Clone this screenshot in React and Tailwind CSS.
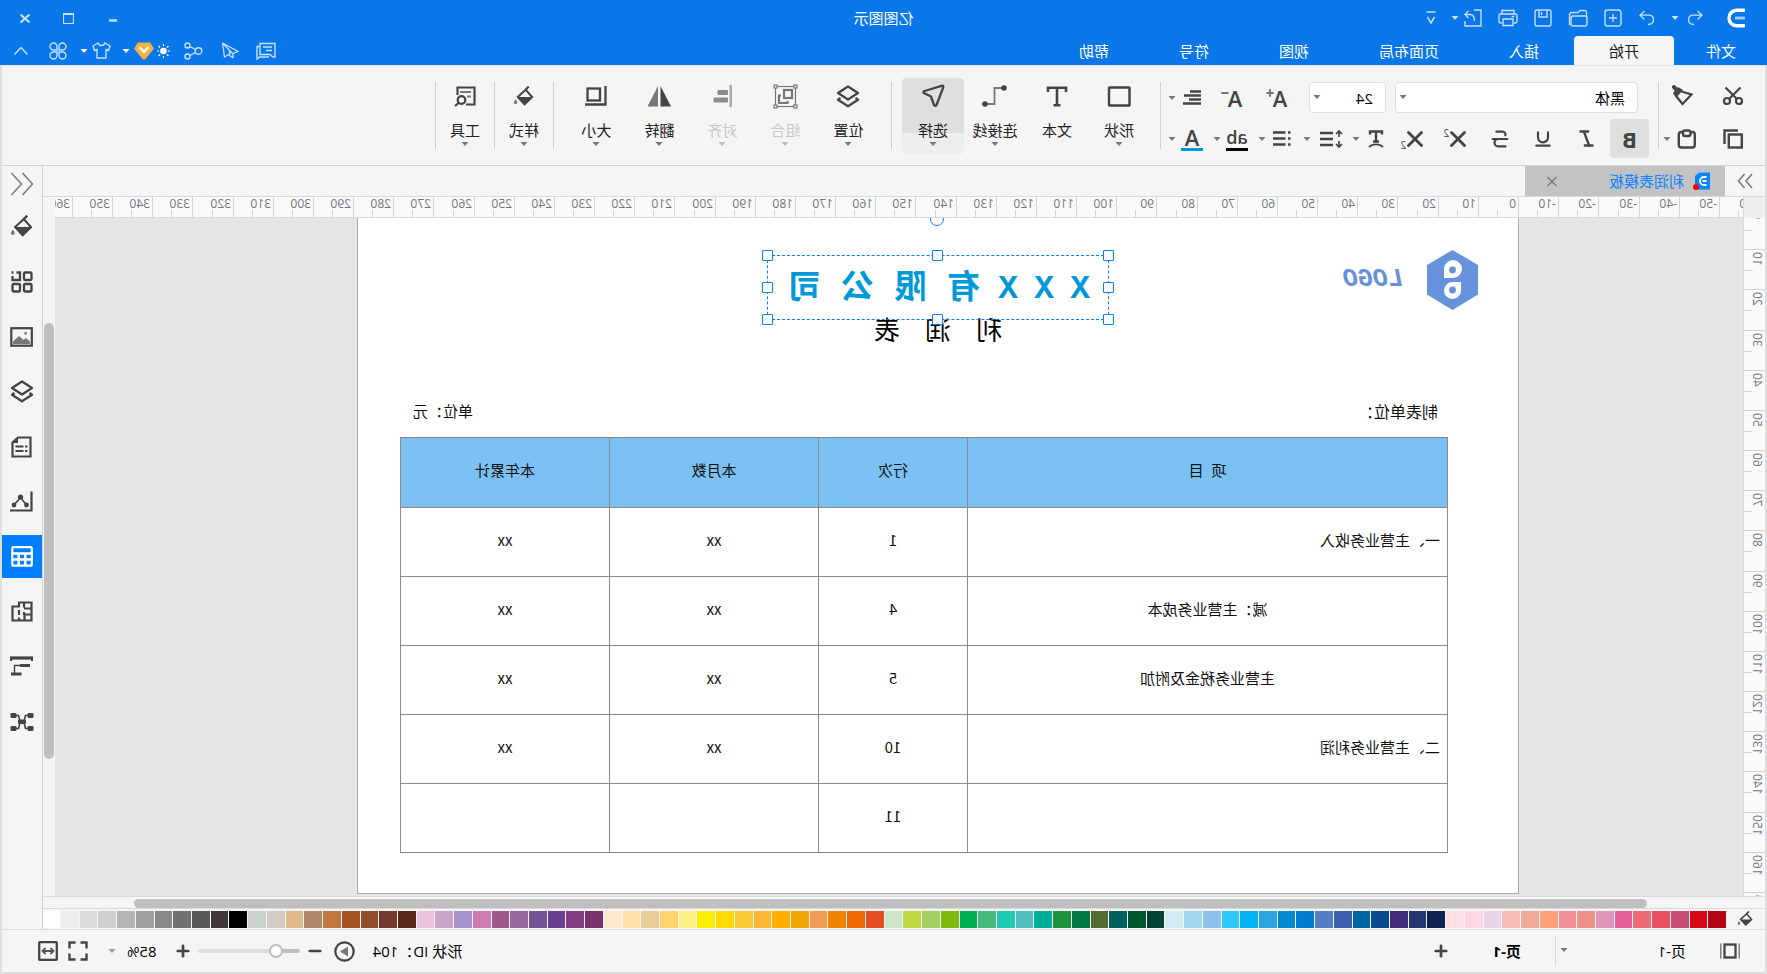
import React from "react";
import { Italic, Underline, Strikethrough, Plus, Minus, X } from "lucide-react";

function Svg({ w, h, sw = 2, className = "", children }) {
  return (
    <svg
      width={w}
      height={h}
      viewBox={`0 0 ${w} ${h}`}
      fill="none"
      stroke="currentColor"
      strokeWidth={sw}
      className={`shrink-0 ${className}`}
      aria-hidden="true"
    >
      {children}
    </svg>
  );
}

function Caret({ className = "text-[#777]" }) {
  return (
    <svg width="8" height="4" viewBox="0 0 8 4" className={`shrink-0 ${className}`} aria-hidden="true">
      <path d="M0.5 0h7L4 4z" fill="currentColor" />
    </svg>
  );
}

/* ---------- icons ---------- */

const UndoArrow = () => (
  <Svg w={16} h={16} sw={1.3}>
    <path d="M5.5 1 1 5.2l4.5 4.3M1 5.2h8.5c3.2 0 5 2 5 4.6 0 2.800-2 4.700-5.500 4.700" />
  </Svg>
);
const RedoArrow = () => (
  <Svg w={16} h={16} sw={1.3}>
    <path d="M10.500 1 15 5.200l-4.500 4.300M15 5.200H6.500c-3.200 0-5 2-5 4.600 0 2.800 2 4.700 5.500 4.700" />
  </Svg>
);
const NewIcon = () => (
  <Svg w={18} h={18} sw={1.4}>
    <rect x="1" y="1" width="16" height="16" rx="2.500" />
    <path d="M9 5v8M5 9h8" />
  </Svg>
);
const OpenIcon = () => (
  <Svg w={20} h={18} sw={1.4}>
    <path d="M1.500 8V3.500a2 2 0 0 1 2-2h4.500l2 2h7l1.500 2v10.500" />
    <rect x="1" y="7" width="16" height="10" rx="2" />
  </Svg>
);
const SaveIcon = () => (
  <Svg w={18} h={18} sw={1.4}>
    <rect x="1" y="1" width="16" height="16" rx="2" />
    <path d="M5 1v7h8V1M10.500 3v3" />
  </Svg>
);
const PrintIcon = () => (
  <Svg w={20} h={18} sw={1.400}>
    <path d="M4 5V1.500h12V5M4 14H2.500A1.500 1.500 0 0 1 1 12.500v-6A1.500 1.500 0 0 1 2.500 5h15A1.500 1.500 0 0 1 19 6.500v6a1.500 1.500 0 0 1-1.500 1.500H16" />
    <path d="M5 10h10v6.500H5zM3.500 7.500h3" />
  </Svg>
);
const ExportIcon = () => (
  <Svg w={18} h={18} sw={1.4}>
    <path d="M8 1H1v16h16v-5M17 5.500H12c-3 0-4.500 2.500-4.500 6.500M13.500 2 17 5.500 13.500 9" />
  </Svg>
);

const ChatIcon = () => (
  <Svg w={20} h={18} sw={1.4}>
    <path d="M1 1.500h15v11H6l-3 2.500H1zM16 4.500h3V17l-2.500-2H7M4 5h9M4 8.500h6" />
  </Svg>
);
const PlaneIcon = () => (
  <Svg w={18} h={17} sw={1.3}>
    <path d="M16.500 1 1 9.500l5 2v4.500M16.500 1 6.500 11.500M16.500 1 14.500 15l-4-2.500L6 16M9.500 9v4" />
  </Svg>
);
const ShareIcon = () => (
  <Svg w={19} h={18} sw={1.4}>
    <circle cx="4.500" cy="9" r="3.300" />
    <circle cx="15.500" cy="3.500" r="2.500" />
    <circle cx="15.500" cy="14.500" r="2.500" />
    <path d="m7.500 7.500 5.700-3M7.500 10.500l5.700 3" />
  </Svg>
);
const SunIcon = () => (
  <Svg w={13} h={14} sw={1.2}>
    <circle cx="6.500" cy="7" r="3.300" fill="currentColor" stroke="none" />
    <path d="M6.500 0v2M6.500 12v2M0 7h2M11 7h2M1.500 2l1.500 1.500M11.500 2 10 3.500M1.500 12 3 10.500M11.500 12 10 10.500" />
  </Svg>
);
const GemIcon = () => (
  <svg width="20" height="18" viewBox="0 0 20 18" aria-hidden="true" className="shrink-0">
    <path d="M4 0.500h12L20 6.500 11.500 17q-1.500 1.500-3 0L0 6.500z" fill="#f5b041" />
    <path d="m5.500 5 4.500 5 4.500-5" fill="none" stroke="#fff" strokeWidth="2.400" />
  </svg>
);
const ShirtIcon = () => (
  <Svg w={19} h={17} sw={1.4}>
    <path d="M6 1 1 4l1.500 4.500L5 7.500V16h9V7.500l2.500 1L18 4l-5-3c-.8 2-2 2.500-3.500 2.500S6.800 3 6 1z" />
  </Svg>
);
const AppsIcon = () => (
  <Svg w={18} h={18} sw={1.4}>
    <path d="M8 8H4.500A3.500 3.500 0 1 1 8 4.500zM10 8V4.500A3.500 3.500 0 1 1 13.500 8zM8 10v3.500A3.500 3.500 0 1 1 4.500 10zM10 10h3.500a3.500 3.500 0 1 1-3.500 3.500z" />
  </Svg>
);

const CutIcon = () => (
  <Svg w={20} h={20} sw={2.200}>
    <circle cx="4" cy="15" r="3" />
    <circle cx="16" cy="15" r="3" />
    <path d="M2.500 1.500 14 13M17.500 1.500 6 13" />
  </Svg>
);
const BrushIcon = () => (
  <Svg w={21} h={21} sw={2.200}>
    <path d="M11.500 6.500 1.500 9.500l9 9.500 6-7.500" />
    <path d="m10 5 5-3 5 6-3 5z" fill="currentColor" stroke="none" />
    <path d="m16 5.500 3-3.500" strokeWidth="4" strokeLinecap="round" />
  </Svg>
);
const CopyIcon = () => (
  <Svg w={20} h={20} sw={2.400}>
    <rect x="1.200" y="5.500" width="13" height="13" />
    <path d="M5 1.500h13.500V15" />
  </Svg>
);
const PasteIcon = () => (
  <Svg w={19} h={20} sw={2.400}>
    <rect x="1.200" y="3" width="16" height="15.500" rx="2.500" />
    <rect x="5.500" y="1.500" width="7.500" height="5.500" rx="2" fill="#f5f5f5" />
  </Svg>
);
const CurveTextIcon = () => (
  <Svg w={16} h={18} sw={2.400}>
    <path d="M2 4.500V1.500h12v3M8 1.500V11M5 11.500h6" />
    <path d="M1 17c3.500-3.500 10.500-3.500 14 0" strokeWidth="1.800" />
  </Svg>
);
const LineSpacingIcon = () => (
  <Svg w={24} h={18} sw={2.400}>
    <path d="M10 3h13M10 9h13M10 15h13" />
    <path d="M4 1v6M4 11v6M1 4l3-3 3 3M1 14l3 3 3-3" strokeWidth="1.700" />
  </Svg>
);
const ListIcon = () => (
  <Svg w={19} h={17} sw={2.400}>
    <path d="M5.500 2.500H18M5.500 8.500H18M5.500 14.500H18M0.500 2.500H3M0.500 8.500H3M0.500 14.500H3" />
  </Svg>
);
const AlignLinesIcon = () => (
  <Svg w={18} h={15} sw={2.400}>
    <path d="M0 1.500h11M0 5.500h17M0 9.500h12M0 13.500h18" />
  </Svg>
);

const ShapeIcon = () => (
  <Svg w={24} h={21} sw={2.400}>
    <rect x="1.500" y="1.500" width="20.500" height="18" rx="0.500" />
  </Svg>
);
const TextIcon = () => (
  <Svg w={22} h={21} sw={2.600}>
    <path d="M2 6V1.800h18V6M11 1.800v17.500M7.500 19.200h7" />
  </Svg>
);
const ConnectorIcon = () => (
  <Svg w={25} h={22} sw={1.800}>
    <path d="M3 3h9.500v16H22" stroke="#777" />
    <circle cx="3" cy="3" r="2.800" fill="currentColor" stroke="none" />
    <circle cx="22" cy="19" r="2.800" fill="currentColor" stroke="none" />
  </Svg>
);
const SelectIcon = () => (
  <Svg w={24} h={24} sw={2.300}>
    <path d="M1.800 3.500Q1.300 1.200 3.500 1.800L20.500 7q2 1 .3 2.200L14 12.500l-3 8.500q-1.200 1.800-2.500 0z" strokeLinejoin="round" />
  </Svg>
);
const LayersIcon = () => (
  <Svg w={24} h={23} sw={2.300}>
    <path d="M12 1.500 22 8l-10 6.500L2 8z" strokeLinejoin="round" />
    <path d="M4.500 13 2 14.800l10 6.500 10-6.500-2.500-1.800" strokeLinejoin="round" />
  </Svg>
);
const GroupIcon = () => (
  <Svg w={25} h={25} sw={1.200} className="text-[#777]">
    <rect x="2.500" y="2.500" width="20" height="20" />
    <rect x="1" y="1" width="3" height="3" fill="#f5f5f5" />
    <rect x="21" y="1" width="3" height="3" fill="#f5f5f5" />
    <rect x="1" y="21" width="3" height="3" fill="#f5f5f5" />
    <rect x="21" y="21" width="3" height="3" fill="#f5f5f5" />
    <rect x="6" y="6" width="8" height="8" strokeWidth="2.200" />
    <path d="M17 11.500h2V19h-8.500v-2" strokeWidth="2.200" />
  </Svg>
);
const AlignIcon = () => (
  <Svg w={19} h={22} sw={0} className="text-[#8c8c8c]">
    <rect x="0" y="0" width="2.500" height="22" fill="#aaa" />
    <rect x="4" y="5" width="10.500" height="5" rx="1" fill="currentColor" />
    <rect x="4" y="12.500" width="14.500" height="5" rx="1" fill="currentColor" />
  </Svg>
);
const FlipIcon = () => (
  <Svg w={24} h={21} sw={0}>
    <path d="M10.500 0v20.500H0z" fill="#444" />
    <path d="M13 0v20.500h10.500z" fill="#777" />
  </Svg>
);
const SizeIcon = () => (
  <Svg w={22} h={20} sw={2.300}>
    <rect x="7" y="2.500" width="12.500" height="12" />
    <path d="M1.500 0v18.500H22" />
  </Svg>
);
const BucketIcon = ({ w = 21 }) => (
  <svg width={w} height={w} viewBox="0 0 20 20" aria-hidden="true" className="shrink-0">
    <path d="M5 0.500 8 3.500" stroke="currentColor" strokeWidth="2" />
    <path d="M8 3.500 15.500 10.500 9 17.500 1.800 10.500z" fill="none" stroke="currentColor" strokeWidth="1.900" />
    <path d="M1.500 10.500h14.500L9 18z" fill="currentColor" />
    <path d="M17.500 12.500c1 1.500 1.700 2.300 1.700 3.200a1.600 1.600 0 0 1-3.300 0c0-.9.700-1.700 1.600-3.200z" fill="#777" />
  </svg>
);
const ToolsIcon = () => (
  <Svg w={22} h={21} sw={2.200}>
    <path d="M10 18.500H1.500v-17h17V9" />
    <path d="M5 6h11M5 10.500h4" stroke="#777" strokeWidth="1.800" />
    <circle cx="14.500" cy="14" r="3.800" />
    <path d="m17.500 17 3.500 3" />
  </Svg>
);

/* side panel icons */
const GridIcon = () => (
  <Svg w={22} h={22} sw={2.300}>
    <rect x="1.500" y="1.500" width="7.500" height="7.500" rx="1" />
    <rect x="1.500" y="13" width="7.500" height="7.500" rx="1" />
    <rect x="13" y="13" width="7.500" height="7.500" rx="1" />
    <path d="M16.500 1.500H13V9h7.500V5M19.500 1.500h2" />
  </Svg>
);
const ImageIcon = () => (
  <Svg w={23} h={20} sw={2.200}>
    <rect x="1.200" y="1.200" width="20.500" height="17.500" />
    <path d="M3 17v-2.500l4-3.500 2.500 2 4.500-4 6 5.500V17z" fill="#777" stroke="none" />
    <rect x="6" y="5" width="2.500" height="2.500" fill="#777" stroke="none" />
  </Svg>
);
const DocIcon = () => (
  <Svg w={21} h={22} sw={2.200}>
    <path d="M1.500 1.500H14l5.500 5v14h-18z" />
    <path d="M14 1v6h6z" fill="currentColor" strokeWidth="0" />
    <path d="M4.500 10.500H7M8.500 10.500h8M4.500 15H7M8.500 15h8" strokeWidth="1.900" />
  </Svg>
);
const ChartIcon = () => (
  <Svg w={23} h={21} sw={2.200}>
    <path d="M1.500 0.500V19.500H23" />
    <path d="m6.500 14 6-7.500 6.500 7.500" strokeWidth="1.600" />
    <circle cx="6.500" cy="14" r="2.400" fill="currentColor" stroke="none" />
    <circle cx="12.500" cy="6" r="2.600" fill="currentColor" stroke="none" />
    <circle cx="19" cy="14" r="2.400" fill="currentColor" stroke="none" />
  </Svg>
);
const TableIcon = () => (
  <Svg w={22} h={21} sw={2.200}>
    <rect x="1.200" y="1.200" width="19.500" height="18.500" rx="1.500" />
    <path d="M1 7.500h20M1 13.500h20M7.700 7.500v12M14.300 7.500v12" strokeWidth="2.600" />
  </Svg>
);
const FloorIcon = () => (
  <Svg w={22} h={21} sw={2.200}>
    <path d="M1.500 1.500H14v4h6.500v14h-19zM9 1.500v5M1.500 7.500H9M1.500 13.500h7v6M9 11v3M14 9v5M14 16.500v3" />
  </Svg>
);
const GanttIcon = () => (
  <Svg w={23} h={21} sw={3.200}>
    <path d="M0 2h23" />
    <path d="M1 2v3M22 2v3" strokeWidth="2" />
    <path d="M3 9.500h10M11.500 18H22" />
    <path d="M13 9.500h5.500V17" strokeWidth="1.400" />
  </Svg>
);
const MindIcon = () => (
  <Svg w={24} h={20} sw={1.600}>
    <path d="M6 3.500h2.500l1.500 5.500M6 16.500h2.500l1.500-6M18 3.500h-2.500L14 9M18 16.500h-2.500L14 10.500" />
    <rect x="0.500" y="1" width="6" height="5" rx="1.200" fill="currentColor" stroke="none" />
    <rect x="0.500" y="14" width="6" height="5" rx="1.200" fill="currentColor" stroke="none" />
    <rect x="17.500" y="1" width="6" height="5" rx="1.200" fill="currentColor" stroke="none" />
    <rect x="17.500" y="14" width="6" height="5" rx="1.200" fill="currentColor" stroke="none" />
    <rect x="8" y="7.500" width="8" height="4.500" rx="1.200" fill="currentColor" stroke="none" />
  </Svg>
);

/* ---------- title bar ---------- */

function IconButton({ label, className = "", children }) {
  return (
    <button type="button" aria-label={label} className={`flex shrink-0 items-center justify-center ${className}`}>
      {children}
    </button>
  );
}

function TitleBar() {
  return (
    <div className="grid h-9 grid-cols-[1fr_auto_1fr] items-center text-[#c4e0fc]">
      <div className="flex h-full items-center pl-[22px]">
        <Svg w={18} h={20} sw={3.400} className="text-white">
          <path d="M0 2.200h8.500a7.500 7.800 0 0 1 0 15.600H0" />
          <path d="M0 10h10" stroke="#9dcbfb" strokeWidth="3" />
        </Svg>
        <IconButton label="撤销" className="ml-6 w-4"><UndoArrow /></IconButton>
        <IconButton label="撤销列表" className="ml-2 w-2"><Caret className="text-[#c4e0fc]" /></IconButton>
        <IconButton label="恢复" className="ml-4 w-4"><RedoArrow /></IconButton>
        <div className="ml-4 flex items-center gap-[15px]">
          <IconButton label="新建" className="w-5"><NewIcon /></IconButton>
          <IconButton label="打开" className="w-5"><OpenIcon /></IconButton>
          <IconButton label="保存" className="w-5"><SaveIcon /></IconButton>
          <IconButton label="打印" className="w-5"><PrintIcon /></IconButton>
          <IconButton label="导出" className="w-5"><ExportIcon /></IconButton>
        </div>
        <IconButton label="导出选项" className="ml-1 w-2"><Caret className="text-[#c4e0fc]" /></IconButton>
        <IconButton label="自定义工具栏" className="ml-3 w-4">
          <Svg w={10} h={14} sw={1.500}>
            <path d="M0.500 1h9M1.500 6 5 12l3.500-6" />
          </Svg>
        </IconButton>
      </div>
      <h1 className="text-[15px] leading-5 text-white">亿图图示</h1>
      <div className="flex items-center justify-end gap-6 pr-[15px]">
        <IconButton label="最小化" className="h-5 w-5 pt-1">
          <Svg w={8} h={3} sw={2.500}><path d="M0 1.500h8" /></Svg>
        </IconButton>
        <IconButton label="最大化" className="h-5 w-5">
          <Svg w={11} h={11} sw={1.200}><path d="M0.500 0.500h10v10H0.500zM0 1.500h11" /></Svg>
        </IconButton>
        <IconButton label="关闭" className="h-5 w-5">
          <Svg w={10} h={9} sw={2}><path d="m0.500 0.500 9 8M9.500 0.500l-9 8" /></Svg>
        </IconButton>
      </div>
    </div>
  );
}

const menus = ["文件", "开始", "插入", "页面布局", "视图", "符号", "帮助"];

function MenuBar() {
  return (
    <div className="flex h-[29px] items-stretch text-[#c4e0fc]">
      <nav className="flex">
        {menus.map((m) => (
          <a
            key={m}
            href="#"
            className={
              m === "开始"
                ? "flex items-center rounded-t-sm bg-[#f5f5f5] px-[35px] text-[15px] leading-5 text-[#222]"
                : m === "文件"
                ? "flex items-center pr-8 pl-[31px] text-[15px] leading-5 text-white"
                : "flex items-center px-[35px] text-[15px] leading-5 text-white"
            }
          >
            {m}
          </a>
        ))}
      </nav>
      <div className="ml-auto flex items-center pr-3">
        <div className="flex gap-4">
          <IconButton label="反馈" className="w-5"><ChatIcon /></IconButton>
          <IconButton label="发送" className="w-5"><PlaneIcon /></IconButton>
          <IconButton label="分享" className="w-5"><ShareIcon /></IconButton>
        </div>
        <IconButton label="会员" className="ml-[14px] gap-[3px] text-white">
          <SunIcon />
          <GemIcon />
        </IconButton>
        <IconButton label="会员选项" className="ml-1 w-2"><Caret className="text-white" /></IconButton>
        <IconButton label="皮肤" className="ml-[10px] w-5"><ShirtIcon /></IconButton>
        <IconButton label="皮肤选项" className="ml-1 w-2"><Caret className="text-white" /></IconButton>
        <IconButton label="应用" className="ml-3 w-5"><AppsIcon /></IconButton>
        <IconButton label="折叠功能区" className="ml-[18px] w-[18px]">
          <Svg w={14} h={8} sw={1.500}><path d="m0.500 7.500 6.500-7 6.500 7" /></Svg>
        </IconButton>
      </div>
    </div>
  );
}

/* ---------- ribbon ---------- */

const Divider = () => <div className="mt-1 h-[67px] w-px shrink-0 bg-[#cfcfcf]" />;

function Dropdown({ label, wide, children }) {
  return (
    <button type="button" aria-label={label} className="flex h-full shrink-0 items-center gap-1">
      <span className={wide ? "flex w-7 items-center" : "flex w-6 items-center justify-center"}>{children}</span>
      <Caret />
    </button>
  );
}

function Combo({ id, label, value, className }) {
  return (
    <div className={`relative shrink-0 ${className}`}>
      <label htmlFor={id} className="sr-only">{label}</label>
      <select
        id={id}
        defaultValue={value}
        className="h-[31px] w-full appearance-none rounded-sm border border-[#dcdfe3] bg-white pr-5 pl-3 text-[15px] leading-6 text-black"
      >
        <option>{value}</option>
      </select>
      <span className="pointer-events-none absolute top-[13px] right-1">
        <Caret />
      </span>
    </div>
  );
}

function BigButton({ label, icon, state, menu = true, width = "w-[62px]" }) {
  const tone =
    state === "active"
      ? "rounded-sm bg-[linear-gradient(#dfdfdf_72%,#eeeeee_72%)] text-[#444]"
      : "text-[#444]";
  return (
    <button
      type="button"
      disabled={state === "disabled"}
      className={`flex h-[76px] shrink-0 flex-col items-center ${width} ${tone}`}
    >
      <span className="flex h-9 items-center">{icon}</span>
      <span className={`mt-1.5 text-[15px] leading-5 ${state === "disabled" ? "text-[#c8c8c8]" : "text-[#222]"}`}>{label}</span>
      {menu && (
        <span className="mt-0.5">
          <Caret className={state === "disabled" ? "text-[#bbb]" : "text-[#777]"} />
        </span>
      )}
    </button>
  );
}

function Ribbon() {
  return (
    <div className="flex h-[100px] items-start overflow-hidden border-b border-[#d2d2d2] bg-[#f5f5f5] pt-3 text-[#444]">
      <div className="flex h-20 w-[106px] shrink-0 flex-col gap-[6px] pt-1 pl-3">
        <div className="flex h-[31px] items-center">
          <IconButton label="剪切" className="w-10 pb-1"><CutIcon /></IconButton>
          <IconButton label="格式刷" className="ml-[10px] w-10 pb-1"><BrushIcon /></IconButton>
        </div>
        <div className="flex h-[39px] items-center">
          <IconButton label="复制" className="w-10"><CopyIcon /></IconButton>
          <IconButton label="粘贴" className="ml-[10px] w-8"><PasteIcon /></IconButton>
          <IconButton label="粘贴选项" className="w-2"><Caret /></IconButton>
        </div>
      </div>
      <Divider />
      <div className="flex w-[497px] shrink-0 flex-col gap-[6px] pt-1">
        <div className="flex h-[31px] items-center pl-5">
          <Combo id="font-family" label="字体" value="黑体" className="w-[243px]" />
          <Combo id="font-size" label="字号" value="24" className="ml-[9px] w-[77px]" />
          <div className="ml-[21px] flex gap-[21px]">
            <IconButton label="增大字号" className="w-6 items-start">
              <span className="text-[22px] leading-7 font-semibold">A</span>
              <Plus size={10} strokeWidth={5} className="mt-1 -ml-0.5 text-[#777]" />
            </IconButton>
            <IconButton label="减小字号" className="w-6 items-start">
              <span className="text-[22px] leading-7 font-semibold">A</span>
              <Minus size={10} strokeWidth={5} className="mt-1 -ml-0.5 text-[#777]" />
            </IconButton>
          </div>
          <div className="ml-[15px] h-full">
            <Dropdown label="对齐方式"><AlignLinesIcon /></Dropdown>
          </div>
        </div>
        <div className="flex h-[39px] items-center pl-[9px]">
          <IconButton label="加粗" className="h-full w-[39px] rounded-sm bg-[#dfdfdf] text-[22px] leading-7 font-bold">B</IconButton>
          <div className="ml-0.5 flex">
            <IconButton label="倾斜" className="w-[43px]"><Italic size={21} strokeWidth={2.600} /></IconButton>
            <IconButton label="下划线" className="w-[43px]"><Underline size={20} strokeWidth={2.600} /></IconButton>
            <IconButton label="删除线" className="w-[43px]"><Strikethrough size={22} strokeWidth={2.400} /></IconButton>
            <IconButton label="上标" className="w-[43px]">
              <X size={26} strokeWidth={2.600} />
              <span className="-mt-3 -ml-1 text-[10px] leading-3">2</span>
            </IconButton>
            <IconButton label="下标" className="w-[43px]">
              <X size={26} strokeWidth={2.600} />
              <span className="mt-3 -ml-1 text-[10px] leading-3">2</span>
            </IconButton>
          </div>
          <div className="ml-[5px] flex h-full items-center gap-[9px]">
            <Dropdown label="文字效果"><CurveTextIcon /></Dropdown>
            <Dropdown label="行距" wide><LineSpacingIcon /></Dropdown>
            <Dropdown label="项目符号"><ListIcon /></Dropdown>
            <Dropdown label="文字底色">
              <span className="flex h-6 w-[22px] items-center justify-center border-b-3 border-black text-[18px] leading-5 font-semibold">ab</span>
            </Dropdown>
            <Dropdown label="字体颜色">
              <span className="flex h-6 w-[22px] items-center justify-center border-b-3 border-[#0099d8] text-[22px] leading-5 font-semibold">A</span>
            </Dropdown>
          </div>
        </div>
      </div>
      <Divider />
      <div className="flex shrink-0 px-[10px]">
        <BigButton label="形状" icon={<ShapeIcon />} />
        <BigButton label="文本" icon={<TextIcon />} menu={false} />
        <BigButton label="连接线" icon={<ConnectorIcon />} />
        <BigButton label="选择" icon={<SelectIcon />} state="active" />
      </div>
      <Divider />
      <div className="flex shrink-0 px-[11px]">
        <BigButton label="位置" icon={<LayersIcon />} width="w-[63px]" />
        <BigButton label="组合" icon={<GroupIcon />} width="w-[63px]" state="disabled" />
        <BigButton label="对齐" icon={<AlignIcon />} width="w-[63px]" state="disabled" />
        <BigButton label="翻转" icon={<FlipIcon />} width="w-[63px]" />
        <BigButton label="大小" icon={<SizeIcon />} width="w-[63px]" />
      </div>
      <Divider />
      <BigButton label="样式" icon={<BucketIcon />} width="w-[58px]" />
      <Divider />
      <BigButton label="工具" icon={<ToolsIcon />} width="w-[58px]" />
      <Divider />
    </div>
  );
}

/* ---------- rulers ---------- */

const UNIT = 4.017;
function cells(from, to, origin) {
  const list = [];
  for (let v = from; v <= to; v += 10) {
    const a = Math.round(origin + v * UNIT);
    const b = Math.round(origin + (v + 10) * UNIT);
    list.push({ v, size: b - a });
  }
  return list;
}
const across = cells(-60, 360, 248);
const down = cells(0, 170, 209);

function HorizontalRuler() {
  return (
    <div className="flex h-[21px] min-w-0 flex-1 overflow-hidden border-b border-[#d9d9d9] bg-[#fafafa]">
      <div className="-ml-[17px] flex">
        {across.map((c) => (
          <div key={c.v} style={{ width: c.size }} className="flex shrink-0 flex-col items-end border-l border-[#d4d4d4]">
            <span className="h-[13px] w-full pl-0.5 text-[12px] leading-[14px] whitespace-nowrap text-[#6f7680]">
              {c.v}
            </span>
            <span className="h-[7px] w-1/2 border-l border-[#d4d4d4]" />
          </div>
        ))}
      </div>
    </div>
  );
}

function VerticalRuler() {
  return (
    <div className="w-[22px] shrink-0 overflow-hidden border-r border-[#d9d9d9] bg-[#fafafa]">
      <div className="-mt-[9px]">
        {down.map((c) => (
          <div key={c.v} style={{ height: c.size }} className="flex flex-col items-end border-t border-[#d4d4d4]">
            <span className="h-1/2 w-full pt-0.5">
              <span className="block w-[15px] rotate-180 text-[12px] leading-[15px] whitespace-nowrap text-[#6f7680] [writing-mode:vertical-rl]">
                {c.v}
              </span>
            </span>
            <span className="h-1/2 w-2 border-t border-[#d4d4d4]" />
          </div>
        ))}
      </div>
    </div>
  );
}

/* ---------- document ---------- */

const handle = "absolute h-[11px] w-[11px] rounded-[1px] border border-[#0a80f5] bg-white";

const rows = [
  { name: "一、主营业务收入", align: "text-left", line: "1", month: "xx", year: "xx" },
  { name: "减：主营业务成本", align: "text-center", line: "4", month: "xx", year: "xx" },
  { name: "主营业务税金及附加", align: "text-center", line: "5", month: "xx", year: "xx" },
  { name: "二、主营业务利润", align: "text-left", line: "10", month: "xx", year: "xx" },
  { name: "", align: "text-left", line: "11", month: "", year: "" },
];

function Sheet() {
  const cell = "border border-[#8a8a8a]";
  return (
    <article className="h-[676px] w-[1162px] shrink-0 border-x border-b border-[#adadad] bg-white font-['Noto_Sans_CJK_SC','Noto_Sans',sans-serif] text-[15px] leading-5 text-[#111]">
      <div className="relative h-[176px]">
        <svg width="51" height="60" viewBox="0 0 51 60" className="absolute top-8 left-10" aria-hidden="true">
          <path d="M25.500 0 51 15v29.500L25.500 60 0 44.500V15z" fill="#6592da" />
          <path d="M25 10a9 9 0 0 1 9 9v9h-9a9 9 0 0 1 0-18zM17 32h8.500a8.500 8.500 0 1 1-8.500 8.500z" fill="#fff" />
          <circle cx="25.500" cy="20" r="3.400" fill="#6592da" />
          <circle cx="25.500" cy="40" r="3.400" fill="#6592da" />
        </svg>
        <span className="absolute top-[46px] left-[115px] font-['Liberation_Mono',monospace] text-[25px] leading-8 font-bold text-[#6592da] italic">
          LOGO
        </span>
        <div className="absolute top-[87px] left-[516px] flex gap-[25px] text-[26px] leading-[48px] text-black">
          <span>利</span>
          <span>润</span>
          <span>表</span>
        </div>
        <h2 className="absolute top-[37px] left-[409px] flex h-[65px] w-[342px] items-baseline justify-center gap-[19px] border border-dashed border-[#0a80f5] pt-2 text-[33px] leading-10 font-bold text-[#0099d8]">
          {["X", "X", "X"].map((t, i) => (
            <span key={i} className="flex w-[17px] justify-center font-['Liberation_Mono',monospace]">
              {t}
            </span>
          ))}
          {["有", "限", "公", "司"].map((t) => (
            <span key={t} className="flex w-[34px] justify-center">{t}</span>
          ))}
        </h2>
        <div className="pointer-events-none absolute top-[37px] left-[409px] h-[65px] w-[342px]">
          <span className={`${handle} -top-[5px] -left-[5px]`} />
          <span className={`${handle} -top-[5px] left-[166px]`} />
          <span className={`${handle} -top-[5px] -right-[5px]`} />
          <span className={`${handle} top-[27px] -left-[5px]`} />
          <span className={`${handle} top-[27px] -right-[5px]`} />
          <span className={`${handle} -bottom-[5px] -left-[5px]`} />
          <span className={`${handle} -bottom-[5px] left-[166px]`} />
          <span className={`${handle} -right-[5px] -bottom-[5px]`} />
          <span className="absolute -top-[43px] left-[165px] h-[14px] w-[14px] rounded-full border border-[#0a80f5] bg-white" />
        </div>
      </div>
      <div className="flex h-[34px] items-center justify-between pr-[55px] pl-20">
        <span className="text-[16px]">制表单位：</span>
        <span>单位：元</span>
      </div>
      <table className="mt-[9px] ml-[70px] w-[1047px] table-fixed border-collapse">
        <colgroup>
          <col className="w-[480px]" />
          <col className="w-[149px]" />
          <col className="w-[209px]" />
          <col className="w-[209px]" />
        </colgroup>
        <thead>
          <tr className="h-[70px] bg-[#7cc1f3]">
            {["项 目", "行次", "本月数", "本年累计"].map((h) => (
              <th key={h} scope="col" className={`${cell} pb-1.5 font-normal`}>
                {h === "项 目" ? (
                  <span className="flex justify-center gap-2"><span>项</span><span>目</span></span>
                ) : (
                  h
                )}
              </th>
            ))}
          </tr>
        </thead>
        <tbody>
          {rows.map((r) => (
            <tr key={r.line} className="h-[69px]">
              <td className={`${cell} ${r.align} px-[7px] pb-1`}>{r.name}</td>
              <td className={`${cell} pb-1 text-center`}>{r.line}</td>
              <td className={`${cell} pb-1 text-center`}>{r.month}</td>
              <td className={`${cell} pb-1 text-center`}>{r.year}</td>
            </tr>
          ))}
        </tbody>
      </table>
    </article>
  );
}

/* ---------- palette ---------- */

const palette = [
  "#b60716", "#d8081c", "#c84f78", "#e95062", "#eb6c72", "#e75e9c", "#e096b8", "#ee8f88", "#f08f9a", "#ffa07a",
  "#f0aa96", "#f6bcb8", "#ead5e8", "#ffd6e6", "#ffdfe3", "#0f214f", "#233871", "#412d7b", "#0a4a8f", "#0067a4",
  "#3f60af", "#5480c3", "#007dcf", "#008acf", "#2ba5e2", "#00b3f2", "#2fc8fa", "#8bc1ea", "#a1d7ee", "#d0ebf4",
  "#004236", "#00572f", "#00625f", "#556b2f", "#007843", "#1e9640", "#00ae9b", "#52bdc1", "#1bcbb2", "#48b97c",
  "#00ae54", "#7fb80e", "#a3cf62", "#bfd743", "#cde6c7", "#e2501f", "#ec6800", "#f08300", "#f19a53", "#f0a500",
  "#ffaf00", "#ffb833", "#fac933", "#ffd900", "#ffee00", "#fcf284", "#ffd470", "#e9cc97", "#ffdeac", "#fde8d0",
  "#7a326f", "#823e82", "#684193", "#755397", "#97689f", "#9e5889", "#cc7cb0", "#a993cf", "#c6a5c8", "#eac1da",
  "#5a281a", "#753930", "#924f29", "#a85425", "#c07740", "#b3866b", "#deb887", "#d3cac4", "#cad3cb", "#000000",
  "#3e3838", "#5a5757", "#717171", "#888888", "#9fa09f", "#b4b6b4", "#cdcecd", "#dbdbdb", "#eeeeee", "#ffffff",
];

/* ---------- status bar ---------- */

function StatusBar() {
  return (
    <footer className="flex h-[42px] shrink-0 items-center bg-[#f5f5f5] text-[15px] leading-5 text-black">
      <IconButton label="页面视图" className="ml-[25px] w-5 text-[#444]">
        <Svg w={20} h={16} sw={2.300}>
          <rect x="4.500" y="1.500" width="11" height="13" />
          <path d="M0.800 0.500v15M19.200 0.500v15" stroke="#777" strokeWidth="1.400" />
        </Svg>
      </IconButton>
      <div className="relative ml-[34px] w-[131px] border-r border-[#d9d9d9]">
        <label htmlFor="page-picker" className="sr-only">页面</label>
        <select id="page-picker" defaultValue="页-1" className="h-[30px] w-full appearance-none bg-transparent leading-6">
          <option>页-1</option>
        </select>
        <span className="pointer-events-none absolute top-3 right-1"><Caret /></span>
      </div>
      <button type="button" className="ml-[34px] font-bold">页-1</button>
      <IconButton label="添加页面" className="ml-[42px] w-5 text-[#444]"><Plus size={18} strokeWidth={3.600} /></IconButton>
      <div className="ml-auto flex items-center pr-9">
        <span className="whitespace-nowrap">形状 ID：104</span>
        <IconButton label="演示" className="ml-4 w-6 text-[#444]">
          <Svg w={21} h={21} sw={2.200}>
            <circle cx="10.500" cy="10.500" r="9.200" />
            <path d="M7 5.500v10l8-5z" fill="#777" stroke="none" />
          </Svg>
        </IconButton>
        <IconButton label="缩小" className="ml-2 w-5 text-[#444]"><Minus size={18} strokeWidth={3.600} /></IconButton>
        <label htmlFor="zoom" className="sr-only">缩放</label>
        <input
          id="zoom"
          type="range"
          min="0"
          max="450"
          defaultValue="85"
          className="mx-[5px] h-1 w-[102px] appearance-none rounded-full bg-[linear-gradient(to_right,#bfbfbf_24%,#dedede_24%)] [&::-webkit-slider-thumb]:h-[14px] [&::-webkit-slider-thumb]:w-[14px] [&::-webkit-slider-thumb]:appearance-none [&::-webkit-slider-thumb]:rounded-full [&::-webkit-slider-thumb]:border-2 [&::-webkit-slider-thumb]:border-[#bfbfbf] [&::-webkit-slider-thumb]:bg-white"
        />
        <IconButton label="放大" className="w-5 text-[#444]"><Plus size={18} strokeWidth={3.600} /></IconButton>
        <button type="button" className="ml-4 flex items-center gap-[11px]">
          <span>85%</span>
          <Caret className="text-[#999]" />
        </button>
        <IconButton label="全屏" className="ml-5 w-5 text-[#444]">
          <Svg w={20} h={20} sw={2.400}>
            <path d="M1.500 7.500v-6h6M12.500 1.500h6v6M18.500 12.500v6h-6M7.500 18.500h-6v-6" />
          </Svg>
        </IconButton>
        <IconButton label="适合宽度" className="ml-2.5 w-5 text-[#444]">
          <Svg w={20} h={20} sw={2.300}>
            <rect x="1.200" y="1.200" width="17.600" height="17.600" rx="0.500" />
            <path d="M5 10h10M7.500 7 4.500 10l3 3M12.500 7l3 3-3 3" stroke="#555" strokeWidth="1.800" />
          </Svg>
        </IconButton>
      </div>
    </footer>
  );
}

const sideTools = [
  { label: "填充", icon: <BucketIcon w={23} /> },
  { label: "符号库", icon: <GridIcon /> },
  { label: "图片", icon: <ImageIcon /> },
  { label: "图层", icon: <LayersIcon /> },
  { label: "文档", icon: <DocIcon /> },
  { label: "图表", icon: <ChartIcon /> },
  { label: "表格", icon: <TableIcon />, active: true },
  { label: "平面图", icon: <FloorIcon /> },
  { label: "甘特图", icon: <GanttIcon /> },
  { label: "思维导图", icon: <MindIcon /> },
];

export default function App() {
  return (
    <div className="flex h-screen -scale-x-100 flex-col overflow-hidden bg-[#dedede] font-['Open_Sans','Noto_Sans_CJK_SC',sans-serif] text-[#222]">
      <header className="shrink-0 bg-[#0977ea]">
        <TitleBar />
        <MenuBar />
      </header>
      <div className="mx-0.5 mb-0.5 flex min-h-0 flex-1 flex-col border-t border-[#e4e4e4]">
        <Ribbon />
        <div className="flex min-h-0 flex-1 border-b border-[#dadada]">
          <main className="flex min-w-0 flex-1 flex-col bg-[#f5f5f5]">
            <div className="flex h-[31px] shrink-0 items-stretch border-b border-[#d9d9d9]">
              <IconButton label="展开左侧面板" className="w-10 text-[#777]">
                <Svg w={16} h={16} sw={1.500}><path d="m1 1 6 7-6 7M8.500 1l6 7-6 7" /></Svg>
              </IconButton>
              <div className="flex w-[200px] items-center bg-[#c3c3c3] pr-[19px] pl-[14px]">
                <svg width="18" height="18" viewBox="0 0 18 18" aria-hidden="true">
                  <path d="M1 0.500h11L16 4v13.500H1z" fill="#0a84ff" />
                  <path d="M4.500 5h2.500a4 4 0 0 1 0 8H4.500M4.500 9h4" fill="none" stroke="#fff" strokeWidth="1.800" />
                  <circle cx="15" cy="15" r="3" fill="#f00" />
                </svg>
                <a href="#" className="ml-[9px] text-[15px] leading-5 text-[#0a84ff]">利润表模板</a>
                <IconButton label="关闭文档" className="ml-auto w-4 text-[#777]"><X size={17} strokeWidth={2} /></IconButton>
              </div>
            </div>
            <div className="flex min-h-0 flex-1">
              <div className="flex min-w-0 flex-1 flex-col">
                <div className="flex shrink-0">
                  <div className="w-[22px] shrink-0 border-r border-[#d9d9d9] bg-[#efefef]" />
                  <HorizontalRuler />
                </div>
                <div className="flex min-h-0 flex-1">
                  <VerticalRuler />
                  <div className="flex min-w-0 flex-1 items-start overflow-hidden bg-[#e5e5e5] pl-[224px]">
                    <Sheet />
                  </div>
                </div>
              </div>
              <div className="flex w-3 shrink-0 flex-col items-center pt-[126px]">
                <div className="h-[436px] w-[10px] rounded-full bg-[#bfbfbf]" />
              </div>
            </div>
            <div className="h-[13px] shrink-0 border-y border-[#dadada] pt-0.5 pr-[91px] pl-[118px]">
              <div className="h-[9px] rounded-full bg-[#bfbfbf]" />
            </div>
            <div className="flex h-[20px] shrink-0 items-center">
              <IconButton label="填充颜色" className="w-[39px] text-[#444]"><BucketIcon w={16} /></IconButton>
              <div className="flex h-[17px] flex-1 gap-px">
                {palette.map((c) => (
                  <button key={c} type="button" aria-label={c} style={{ backgroundColor: c }} className="flex-1" />
                ))}
              </div>
            </div>
          </main>
          <aside className="flex w-[41px] shrink-0 flex-col gap-3 border-l border-[#cfcfcf] bg-[#f5f5f5] text-[#444]">
            <IconButton label="收起右侧面板" className="-mb-3 h-[39px] w-full pb-1 text-[#777]">
              <Svg w={24} h={24} sw={1.500}><path d="M11.500 1 1.500 12l10 11M22.500 1l-10 11 10 11" /></Svg>
            </IconButton>
            {sideTools.map((t) => (
              <IconButton
                key={t.label}
                label={t.label}
                className={t.active ? "h-[43px] w-full bg-[#0080ff] text-white" : "h-[43px] w-full"}
              >
                {t.icon}
              </IconButton>
            ))}
          </aside>
        </div>
        <StatusBar />
      </div>
    </div>
  );
}
